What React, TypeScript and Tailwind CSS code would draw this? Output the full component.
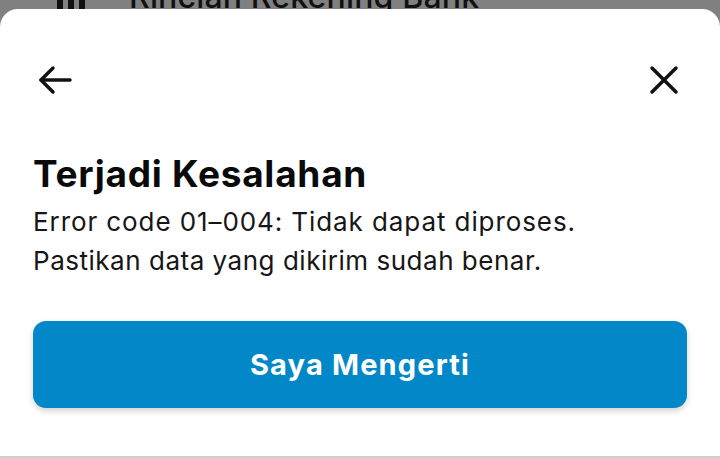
import { useState } from "react";

const BackIcon = () => (
  <svg width="34" height="30" viewBox="0 0 34 30" fill="none" stroke="#111" strokeWidth="3.5" strokeLinecap="round" strokeLinejoin="round">
    <path d="M32 15H3" />
    <path d="M15 3 3 15l12 12" />
  </svg>
);

const CloseIcon = () => (
  <svg width="30" height="30" viewBox="0 0 30 30" fill="none" stroke="#111" strokeWidth="3.5" strokeLinecap="round">
    <path d="M3 3l24 24" />
    <path d="M27 3 3 27" />
  </svg>
);

export default function App() {
  const [open, setOpen] = useState(true);

  return (
    <div className="w-[720px] h-[458px] overflow-hidden bg-[#808080] flex flex-col font-['Inter',_sans-serif]">
      {/* page behind the sheet, mostly hidden */}
      <div className="h-[9px] overflow-hidden flex items-end shrink-0">
        <div className="flex items-end gap-[44px] pl-[57px] -mb-[6px]">
          <div className="flex gap-[5px] items-end h-[30px] pb-[6px]">
            <span className="w-[6px] h-[18px] bg-[#111]" />
            <span className="w-[6px] h-[18px] bg-[#111]" />
            <span className="w-[6px] h-[18px] bg-[#111]" />
          </div>
          <span className="text-[32px] font-medium text-[#111] leading-[36px] tracking-[0.005em]">
            Rincian Rekening Bank
          </span>
        </div>
      </div>

      {/* bottom sheet */}
      <div className="flex-1 bg-white rounded-t-[18px] border-b-2 border-[#cdcdcd] flex flex-col">
        <div className="flex items-center justify-between pl-[38px] pr-[41px] mt-[56px] h-[30px]">
          <button aria-label="Kembali" onClick={() => setOpen(!open)}>
            <BackIcon />
          </button>
          <button aria-label="Tutup">
            <CloseIcon />
          </button>
        </div>

        <div className="px-[33px] mt-[57px]">
          <h1 className="text-[37px] leading-[44px] font-bold text-[#0a0a0a] tracking-[0.02em]">
            Terjadi Kesalahan
          </h1>
          <p className="mt-[6px] text-[26px] leading-[39px] text-[#161616] tracking-[0.035em]">
            Error code 01–004: Tidak dapat diproses.
            <br />
            <span className="tracking-[0.02em]">Pastikan data yang dikirim sudah benar.</span>
          </p>

          <button className="mt-[41px] w-full h-[87px] rounded-[13px] bg-[#0288c9] text-white text-[29px] font-bold tracking-[0.04em] shadow-[0_3px_6px_rgba(0,0,0,0.18)]">
            Saya Mengerti
          </button>
        </div>
      </div>
    </div>
  );
}
